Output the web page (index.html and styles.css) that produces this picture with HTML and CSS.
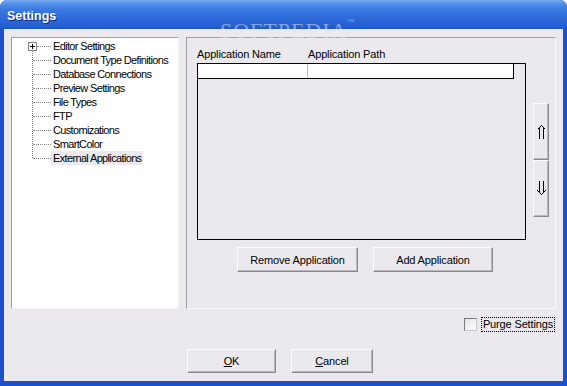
FILE: index.html
```html
<!DOCTYPE html>
<html>
<head>
	<title>Settings</title>
	<meta charset="utf-8">
	<link rel="stylesheet" href="styles.css">
</head>
<body>

	<div class="window">
		<div class="titlebar">
			<span class="title">Settings</span>
			<span class="watermark">SOFTPEDIA<sup>™</sup></span>
		</div>

		<div class="client">
			<div class="panes">
				<div class="tree">
					<ul class="tree-list">
						<li class="has-children"><span class="expander"><svg width="9" height="9" viewBox="0 0 9 9"><rect x="0.5" y="0.5" width="8" height="8" fill="#fff" stroke="#808080"/><path d="M2 4.5H7M4.5 2V7" stroke="#000" shape-rendering="crispEdges"/></svg></span>Editor Settings</li>
						<li>Document Type Definitions</li>
						<li>Database Connections</li>
						<li>Preview Settings</li>
						<li>File Types</li>
						<li>FTP</li>
						<li>Customizations</li>
						<li>SmartColor</li>
						<li><span class="selected">External Applications</span></li>
					</ul>
				</div>

				<div class="page">
					<div class="page-main">
						<div class="columns">
							<span class="col-name">Application Name</span>
							<span class="col-path">Application Path</span>
						</div>
						<div class="list">
							<div class="list-row">
								<div class="cell cell-name"></div>
								<div class="cell cell-path"></div>
							</div>
						</div>
						<div class="list-actions">
							<button class="btn btn-remove">Remove Application</button>
							<button class="btn btn-add">Add Application</button>
						</div>
					</div>
					<div class="arrows">
						<button class="btn arrow"><svg width="9" height="15" viewBox="0 0 9 15"><path d="M0.5 5.5L4.5 1.5L8.5 5.5M2.5 4V15M6.5 4V15" fill="none" stroke="#000"/></svg></button>
						<button class="btn arrow"><svg width="9" height="15" viewBox="0 0 9 15"><path d="M0.5 9.5L4.5 13.5L8.5 9.5M2.5 0V11M6.5 0V11" fill="none" stroke="#000"/></svg></button>
					</div>
				</div>
			</div>

			<div class="purge">
				<span class="checkbox"></span>
				<span class="focus">Purge Settings</span>
			</div>

			<div class="dialog-buttons">
				<button class="btn btn-ok"><u>O</u>K</button>
				<button class="btn btn-cancel"><u>C</u>ancel</button>
			</div>
		</div>
	</div>

</body>
</html>
```

FILE: styles.css
```css
*{
	box-sizing: border-box;
}
html,body{
	width: 100%;
	height: 100%;
}
body{
	margin: 0px;
	background: #fff;
	font-family: 'Liberation Sans', Arial, sans-serif;
	font-size: 11px;
	letter-spacing: -0.15px;
	color: #000;
}

.window{
	width: 567px;
	height: 386px;
	display: flex;
	flex-direction: column;
	background: #1d4fcf;
	border-radius: 7px 7px 0px 0px;
	overflow: hidden;
}

.titlebar{
	height: 29px;
	flex: none;
	position: relative;
	display: flex;
	align-items: center;
	padding-left: 7px;
	background: linear-gradient(#78aaf0 0px, #5a95ea 3px, #4485e6 6px, #3674de 12px, #2b67d8 20px, #2460d2 26px, #1d55c9 29px);
}

.title{
	color: #fff;
	font-weight: bold;
	font-size: 12.5px;
	letter-spacing: 0px;
	text-shadow: 1px 1px 0px #0b2a8a;
	padding-top: 2px;
}

.watermark{
	position: absolute;
	left: 220px;
	top: 18px;
	font-family: 'Liberation Serif', serif;
	font-size: 22px;
	letter-spacing: 1px;
	color: rgba(235,235,240,0.5);
	z-index: 2;
}

.watermark sup{
	font-size: 7px;
	vertical-align: 14px;
}

.client{
	flex: 1;
	margin: 0px 4px 5px 4px;
	background: #ebe9ed;
	padding: 8px 7px 0px 7px;
}

.panes{
	display: flex;
	gap: 7px;
	height: 272px;
}

.tree{
	width: 168px;
	height: 100%;
	background: #fff;
	border: 1px solid;
	border-color: #a0a0a0 #f4f4f4 #f4f4f4 #a0a0a0;
	padding-top: 1px;
}

.tree-list{
	list-style: none;
	margin: 0px;
	padding: 0px;
	position: relative;
	letter-spacing: -0.65px;
}

.tree-list::before{
	content: "";
	position: absolute;
	left: 20px;
	top: 12px;
	height: 107px;
	border-left: 1px dotted #808080;
}

.tree-list li{
	position: relative;
	height: 14px;
	line-height: 14px;
	padding-left: 41px;
	white-space: nowrap;
}

.tree-list li::before{
	content: "";
	position: absolute;
	left: 21px;
	top: 7px;
	width: 18px;
	border-top: 1px dotted #808080;
}

.tree-list li.has-children::before{
	left: 25px;
	width: 14px;
}

.expander{
	position: absolute;
	left: 16px;
	top: 3px;
	width: 9px;
	height: 9px;
	z-index: 1;
	display: flex;
}

.selected{
	background: #ebe9ed;
	padding: 0px 2px;
	margin-left: -2px;
	display: inline-block;
	height: 14px;
}

.page{
	flex: 1;
	height: 100%;
	border: 1px solid;
	border-color: #a0a0a0 #f8f8f8 #f8f8f8 #a0a0a0;
	padding: 9px 0px 0px 10px;
	display: flex;
	gap: 7px;
}

.page-main{
	width: 329px;
	display: flex;
	flex-direction: column;
}

.columns{
	display: flex;
	height: 14px;
	line-height: 14px;
	margin-bottom: 2px;
}

.col-name{
	width: 111px;
}

.list{
	height: 177px;
	border: 1px solid #000;
}

.list-row{
	width: 316px;
	height: 15px;
	display: flex;
	background: #fff;
	border-right: 1px solid #000;
	border-bottom: 1px solid #000;
}

.cell-name{
	width: 110px;
	border-right: 1px solid #b8b8b8;
}

.cell-path{
	flex: 1;
}

.list-actions{
	display: flex;
	gap: 15px;
	margin-top: 7px;
	padding-left: 40px;
}

.btn{
	font-family: 'Liberation Sans', Arial, sans-serif;
	font-size: 11px;
	letter-spacing: -0.15px;
	color: #000;
	background: #ebe9ed;
	border: 1px solid;
	border-color: #fdfdfd #8a8a8a #8a8a8a #fdfdfd;
	box-shadow: inset -1px -1px 0px #b9b9bd;
	padding: 0px;
	margin: 0px;
	outline: none;
	display: flex;
	justify-content: center;
	align-items: center;
}

.btn-remove{
	width: 121px;
	height: 25px;
}

.btn-add{
	width: 120px;
	height: 25px;
}

.arrows{
	display: flex;
	flex-direction: column;
	padding-top: 56px;
}

.arrow{
	width: 16px;
	height: 57px;
}

.arrow svg{
	shape-rendering: crispEdges;
}

.purge{
	display: flex;
	justify-content: flex-end;
	align-items: center;
	gap: 4px;
	margin-top: 8px;
	height: 15px;
	padding-right: 1px;
}

.checkbox{
	width: 13px;
	height: 13px;
	border: 1px solid;
	border-color: #7a7a7a #c8c8c8 #c8c8c8 #7a7a7a;
	background: linear-gradient(135deg, #e4e4e4, #ffffff);
}

.focus{
	border: 1px dotted #000;
	height: 15px;
	line-height: 13px;
	padding: 0px 1px;
}

.dialog-buttons{
	display: flex;
	gap: 15px;
	margin-top: 17px;
	padding-left: 176px;
}

.btn-ok{
	width: 89px;
	height: 24px;
}

.btn-cancel{
	width: 82px;
	height: 24px;
}
```
